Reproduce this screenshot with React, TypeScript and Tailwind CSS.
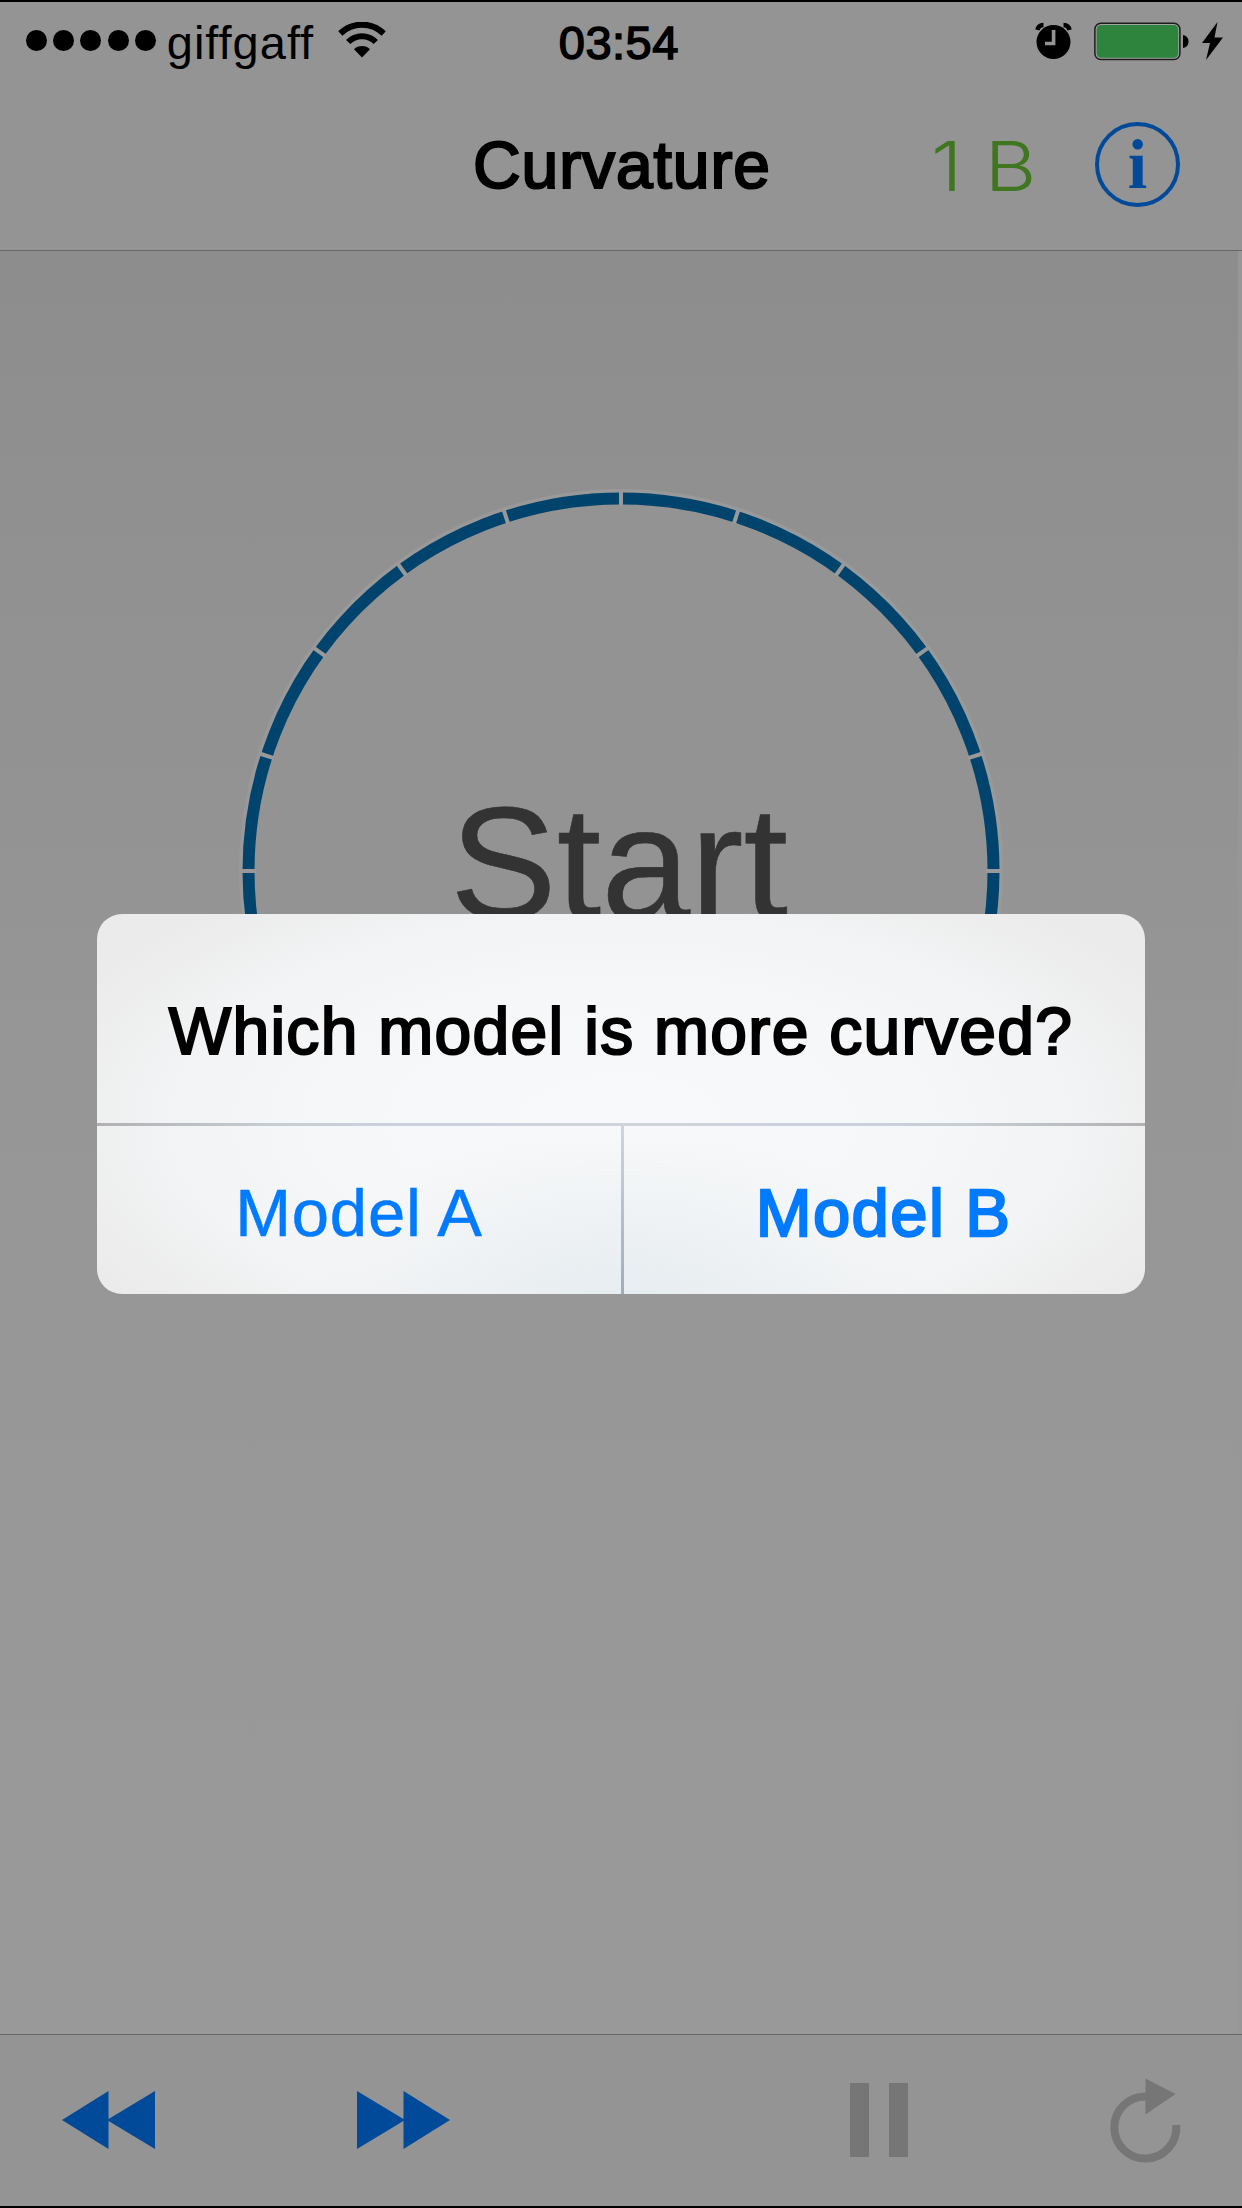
const TICKS = Array.from({ length: 20 }, (_, i) => i * 18);

function StatusBar() {
  return (
    <div className="flex h-[78px] items-start pl-[26px] text-black">
      <div className="mt-[28px] flex gap-[6.2px]">
        {[0, 1, 2, 3, 4].map((i) => (
          <span key={i} className="size-[21px] rounded-full bg-black" />
        ))}
      </div>
      <span className="mt-[14px] ml-[11px] w-[148px] text-[47px] leading-[54px] tracking-[1px]">giffgaff</span>
      <svg className="mt-[20px] ml-[23px]" width="48" height="36" viewBox="0 0 48 36">
        <g fill="none" stroke="#000" strokeWidth="6">
          <path d="M2.3 11.5A31 31 0 0 1 45.7 11.5" />
          <path d="M10.2 20A19.3 19.3 0 0 1 37.8 20" />
        </g>
        <path d="M24 35.5L16 27.2A11.3 11.3 0 0 1 32 27.2Z" />
      </svg>
      <span className="mt-[14px] ml-[173px] w-[121px] text-[47px] leading-[54px] tracking-[0.5px] [-webkit-text-stroke:1.5px_#000]">
        03:54
      </span>
      <svg className="mt-[20px] ml-[355px]" width="38" height="38" viewBox="0 0 38 38">
        <circle cx="18.5" cy="20" r="17" />
        <path d="M2.5 8Q3.5 3 8.5 3M34.5 8Q33.5 3 28.5 3" fill="none" stroke="#000" strokeWidth="4.5" />
        <path d="M18.6 8V21.5H10" fill="none" stroke="#949494" strokeWidth="3.6" />
      </svg>
      <svg className="mt-[20px] ml-[21px]" width="96" height="39" viewBox="0 0 96 39">
        <rect x="0.9" y="1.2" width="85" height="36.4" rx="6" fill="#a3a3a3" stroke="#1c1c1c" strokeWidth="1.5" />
        <rect x="2.6" y="3" width="81.6" height="32.8" rx="4.5" fill="#2f843d" />
        <path d="M89 13Q94.5 14 94.5 19.5T89 26Z" />
      </svg>
      <svg className="mt-[20px] ml-[12px]" width="22" height="39" viewBox="0 0 22 39">
        <path d="M15.5 0L0 21H8L4 38L21 15.5H12.5Z" />
      </svg>
    </div>
  );
}

function NavBar() {
  return (
    <div className="flex h-[171px] items-start border-b border-[#686868] pl-[473px]">
      <h1 className="mt-[47px] w-[302px] text-[66px] leading-[76px] font-normal tracking-[0.9px] text-black [-webkit-text-stroke:2.2px_#000]">
        Curvature
      </h1>
      <span className="mt-[46px] ml-[156px] w-[109px] origin-left scale-x-[1.17] font-[Inter,sans-serif] text-[68px] leading-[80px] font-light whitespace-pre text-[#40761f]">
        1 B
      </span>
      <span className="mt-[42px] ml-[55px] flex size-[85px] items-center justify-center rounded-full border-[4px] border-[#004a99] font-['Liberation_Serif',serif] text-[70px] leading-[70px] font-bold text-[#004a99]">
        i
      </span>
    </div>
  );
}

function Ring() {
  return (
    <div className="mt-[237px] ml-[238px] grid size-[766px] place-items-center">
      <svg className="col-start-1 row-start-1" width="766" height="766" viewBox="-383 -383 766 766">
        <circle r="380" fill="#939393" stroke="#999" strokeWidth="4" />
        <circle r="372.5" fill="none" stroke="#00446e" strokeWidth="12" />
        {TICKS.map((a) => (
          <path key={a} d="M0 -365V-381" stroke="#999" strokeWidth="4" transform={`rotate(${a})`} />
        ))}
      </svg>
      <span className="col-start-1 row-start-1 mt-[-17px] mr-[4px] text-[160px] leading-[184px] text-[#333] [-webkit-text-stroke:0.6px_#333]">
        Start
      </span>
    </div>
  );
}

function Toolbar() {
  return (
    <div className="flex h-[172px] items-start border-t border-[#686868] bg-[#949494] pl-[62px]">
      <svg className="mt-[56px]" width="93" height="58" viewBox="0 0 93 58" fill="#004a99">
        <path d="M0 29L46.5 0V58ZM45 29L93 0V58Z" />
      </svg>
      <svg className="mt-[56px] ml-[202px]" width="93" height="58" viewBox="0 0 93 58" fill="#004a99">
        <path d="M93 29L46.5 0V58ZM48 29L0 0V58Z" />
      </svg>
      <div className="mt-[48px] ml-[400px] flex gap-[20px]">
        <span className="h-[74px] w-[19px] bg-[#767676]" />
        <span className="h-[74px] w-[19px] bg-[#767676]" />
      </div>
      <svg className="mt-[43px] ml-[202px]" width="72" height="86" viewBox="0 0 72 86">
        <path d="M36 18.5A31 31 0 1 0 66.2 47" fill="none" stroke="#767676" strokeWidth="8" />
        <path d="M35.5 0.5L65.5 16L35.5 36.5Z" fill="#767676" />
      </svg>
    </div>
  );
}

function Alert() {
  return (
    <div className="absolute top-[912px] left-[97px] flex h-[380px] w-[1048px] flex-col overflow-hidden rounded-[25px] bg-[#ebebeb]">
      <div className="flex h-full flex-col bg-[radial-gradient(ellipse_58%_75%_at_50%_55%,#f8f9fa_0%,#f6f7f8_50%,#f2f3f4_75%,#ebebeb_100%)]">
        <div className="flex h-full flex-col bg-[radial-gradient(ellipse_30%_50%_at_50%_105%,#e6ecf0_0%,#e6ecf000_100%)]">
          <div className="flex h-[209px] items-start justify-center pt-[79px]">
            <p className="text-[66px] leading-[76px] tracking-[1.3px] whitespace-nowrap text-black [-webkit-text-stroke:2.2px_#000]">
              Which model is more curved?
            </p>
          </div>
          <div className="h-[3px] bg-[linear-gradient(90deg,#b2b0b3_0%,#c6cfd6_18%,#c8d1de_30%,#d0d4dc_50%,#c8d1de_72%,#c6cfd6_82%,#b2b0b3_100%)]" />
          <div className="flex h-[168px] text-[67px] leading-[76px] text-[#007aff]">
            <button className="flex h-full w-[524px] items-start justify-center pt-[49px] tracking-[0.8px] [-webkit-text-stroke:0.5px_#007aff]">
              Model A
            </button>
            <span className="h-full w-[3px] bg-linear-to-b from-[#cfd5dd] to-[#a0adb9]" />
            <button className="flex h-full w-[519px] items-start justify-center pt-[49px] tracking-[1.4px] [-webkit-text-stroke:2.3px_#007aff]">
              Model B
            </button>
          </div>
        </div>
      </div>
    </div>
  );
}

export default function App() {
  return (
    <div className="relative flex h-[2208px] w-[1242px] flex-col overflow-hidden border-y-2 border-black bg-[#949494] font-['Liberation_Sans',Arial,sans-serif]">
      <StatusBar />
      <NavBar />
      <div className="flex h-[1783px] border-r-4 border-[#979797] bg-linear-to-b from-[#8d8d8d] via-[#969696] via-45% to-[#999]">
        <Ring />
      </div>
      <Toolbar />
      <Alert />
    </div>
  );
}
